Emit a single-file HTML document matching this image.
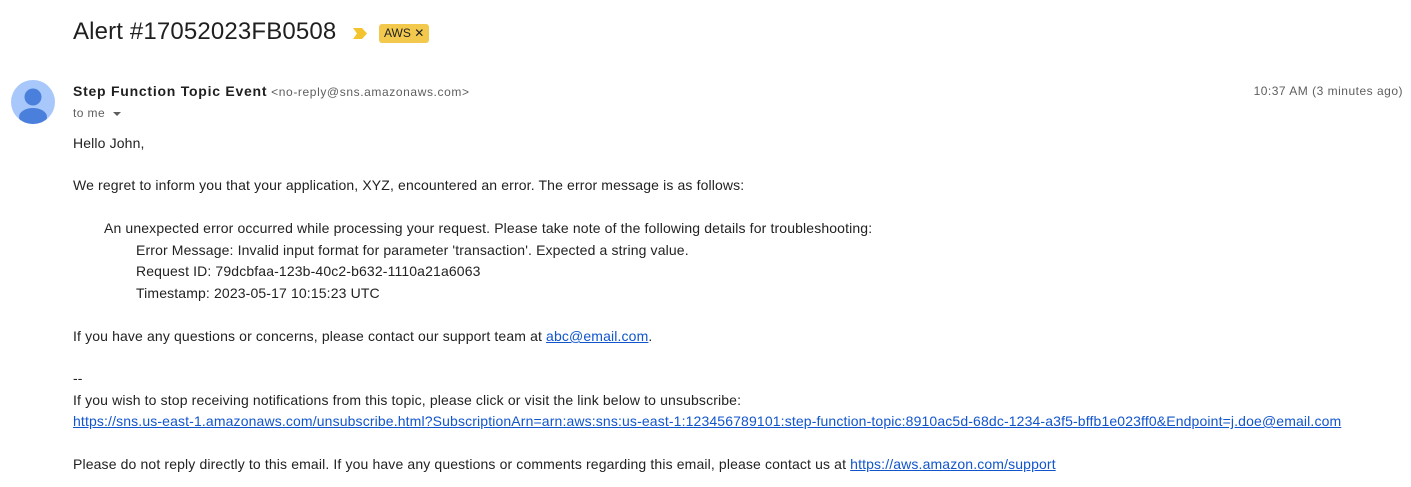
<!DOCTYPE html>
<html><head><meta charset="utf-8"><style>
body{margin:0;width:1411px;height:487px;background:#fff;font-family:"Liberation Sans",Arial,sans-serif;color:#222;position:relative;overflow:hidden}
.a{position:absolute;white-space:nowrap}
.t{font-size:14px;line-height:20px;letter-spacing:0.135px}
a{color:#1155cc;text-decoration:underline}
</style></head><body>
<div class="a" style="left:73px;top:16px;font-size:24px;line-height:32px;color:#1f1f1f;letter-spacing:0.15px">Alert #17052023FB0508</div>
<svg class="a" style="left:352px;top:27px" width="16" height="13" viewBox="0 0 16 13"><path d="M1 1h9l5 5.5-5 5.5H1l4-5.5z" fill="#f4c430"/></svg>
<div class="a" style="left:379px;top:24px;height:19px;padding:0 5px;background:#f2c94c;border-radius:3px;font-size:12px;line-height:19px;color:#222">AWS &#x2715;</div>
<svg class="a" style="left:11px;top:80px" width="44" height="44" viewBox="0 0 44 44"><defs><clipPath id="c"><circle cx="22" cy="22" r="22"/></clipPath></defs><circle cx="22" cy="22" r="22" fill="#a8c7fa"/><g clip-path="url(#c)" fill="#4a7fdc"><circle cx="22" cy="17" r="8.5"/><ellipse cx="22" cy="37" rx="14" ry="9"/></g></svg>
<div class="a" style="left:73px;top:81px;font-size:14px;line-height:20px"><b style="color:#1f1f1f;letter-spacing:0.75px">Step Function Topic Event</b> <span style="font-size:12px;color:#5e5e5e;letter-spacing:0.6px">&lt;no-reply@sns.amazonaws.com&gt;</span></div>
<div class="a" style="right:8px;top:81px;font-size:12px;line-height:20px;color:#5e5e5e;letter-spacing:0.5px">10:37 AM (3 minutes ago)</div>
<div class="a" style="left:73px;top:103px;font-size:12px;line-height:20px;color:#5e5e5e;letter-spacing:0.4px">to me <span style="display:inline-block;width:0;height:0;border-left:4px solid transparent;border-right:4px solid transparent;border-top:4px solid #5e5e5e;vertical-align:middle;margin-left:4px"></span></div>
<div class="a t" style="left:73px;top:133px">Hello John,</div>
<div class="a t" style="left:73px;top:175px">We regret to inform you that your application, XYZ, encountered an error. The error message is as follows:</div>
<div class="a t" style="left:104px;top:218px">An unexpected error occurred while processing your request. Please take note of the following details for troubleshooting:</div>
<div class="a t" style="left:136px;top:240px">Error Message: Invalid input format for parameter 'transaction'. Expected a string value.</div>
<div class="a t" style="left:136px;top:261px">Request ID: 79dcbfaa-123b-40c2-b632-1110a21a6063</div>
<div class="a t" style="left:136px;top:283px">Timestamp: 2023-05-17 10:15:23 UTC</div>
<div class="a t" style="left:73px;top:326px">If you have any questions or concerns, please contact our support team at <a>abc@email.com</a>.</div>
<div class="a t" style="left:73px;top:368px">--</div>
<div class="a t" style="left:73px;top:390px">If you wish to stop receiving notifications from this topic, please click or visit the link below to unsubscribe:</div>
<div class="a t" style="left:73px;top:411px"><a>https://sns.us-east-1.amazonaws.com/unsubscribe.html?SubscriptionArn=arn:aws:sns:us-east-1:123456789101:step-function-topic:8910ac5d-68dc-1234-a3f5-bffb1e023ff0&amp;Endpoint=j.doe@email.com</a></div>
<div class="a t" style="left:73px;top:454px">Please do not reply directly to this email. If you have any questions or comments regarding this email, please contact us at <a>https://aws.amazon.com/support</a></div>
</body></html>
